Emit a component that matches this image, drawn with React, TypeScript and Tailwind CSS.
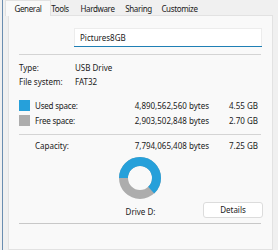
const font = { fontFamily: '"Segoe UI", "Noto Sans", "Open Sans", sans-serif' };

function Donut({ used }: { used: number }) {
  const r = 16.5;
  const c = 2 * Math.PI * r;
  return (
    <svg width="42" height="42" viewBox="0 0 42 42">
      <circle cx="21" cy="21" r={r} fill="none" stroke="#adadad" strokeWidth="9" />
      <circle
        cx="21"
        cy="21"
        r={r}
        fill="none"
        stroke="#26a0da"
        strokeWidth="9"
        strokeDasharray={`${used * c} ${c}`}
        transform="rotate(180 21 21)"
      />
    </svg>
  );
}

function SpaceRow({ color, label, bytes, gb }: { color: string; label: string; bytes: string; gb: string }) {
  return (
    <div className="flex h-[15px] items-center pl-[10px]">
      <div className={`h-[11px] w-[11px] ${color}`} />
      <span className="ml-[5px] w-[98px] tracking-[-0.2px]">{label}</span>
      <span className="w-[76px] text-right">{bytes}</span>
      <span className="w-[49px] text-right">{gb}</span>
    </div>
  );
}

const tabs = [
  { name: 'Tools', w: 'w-[18px]' },
  { name: 'Hardware', w: 'w-[57px]' },
  { name: 'Sharing', w: 'w-[25px]' },
  { name: 'Customize', w: 'w-[57px]' },
];

export default function App() {
  return (
    <div className="flex h-[250px] w-[278px] overflow-hidden bg-[#f0f0f0] text-[8px] text-[#1a1a1a]" style={font}>
      <div className="ml-[2px] w-px bg-[#6a8db0]" />
      <div className="flex flex-1 flex-col">
        <div className="relative z-10 flex h-[16px] items-end pl-[2px] tracking-[-0.35px]">
          <div className="flex h-[16px] w-[46px] items-start justify-center border border-b-0 border-[#e2e2e2] bg-[#f9f9f9] pt-[2px]">
            General
          </div>
          <div className="flex h-[15px] items-center">
            {tabs.map((t) => (
              <span key={t.name} className={`flex justify-center whitespace-nowrap ${t.w}`}>
                {t.name}
              </span>
            ))}
          </div>
        </div>
        <div className="-mt-px ml-[5px] mr-[5px] flex flex-1 flex-col border border-[#e2e2e2] bg-[#f9f9f9]">
          <div className="ml-[65px] mt-[12px] flex h-[18px] w-[188px] items-center border border-b-0 border-[#ececec] bg-white pl-[5px]">
            Pictures8GB
          </div>
          <div className="ml-[65px] h-px w-[188px] bg-[#1f7fb5]" />
          <div className="ml-[10px] mr-[11px] mt-[7px] h-px bg-[#d4d4d4]" />
          <div className="mt-[6px] flex h-[14px] items-center pl-[10px]">
            <span className="w-[56px]">Type:</span>
            <span>USB Drive</span>
          </div>
          <div className="flex h-[14px] items-center pl-[10px]">
            <span className="w-[56px]">File system:</span>
            <span>FAT32</span>
          </div>
          <div className="mt-[9px]">
            <SpaceRow color="bg-[#26a0da]" label="Used space:" bytes="4,890,562,560 bytes" gb="4.55 GB" />
            <SpaceRow color="bg-[#adadad]" label="Free space:" bytes="2,903,502,848 bytes" gb="2.70 GB" />
          </div>
          <div className="ml-[10px] mr-[11px] mt-[6px] h-px bg-[#d4d4d4]" />
          <div className="mt-[4px] flex h-[14px] items-center pl-[26px]">
            <span className="w-[98px]">Capacity:</span>
            <span className="w-[76px] text-right">7,794,065,408 bytes</span>
            <span className="w-[49px] text-right">7.25 GB</span>
          </div>
          <div className="mt-[4px] flex justify-center pr-[1px]">
            <Donut used={4890562560 / 7794065408} />
          </div>
          <div className="mt-[3px] grid grid-cols-[1fr_auto_1fr] items-center">
            <div />
            <span className="pt-[3px]">Drive D:</span>
            <div className="flex justify-end pr-[9px]">
              <button className="h-[16px] w-[60px] rounded-[3px] border border-[#dcdcdc] bg-white text-[8px]">Details</button>
            </div>
          </div>
          <div className="ml-[10px] mr-[11px] mt-[5px] h-px bg-[#c8c8c8]" />
        </div>
      </div>
    </div>
  );
}
